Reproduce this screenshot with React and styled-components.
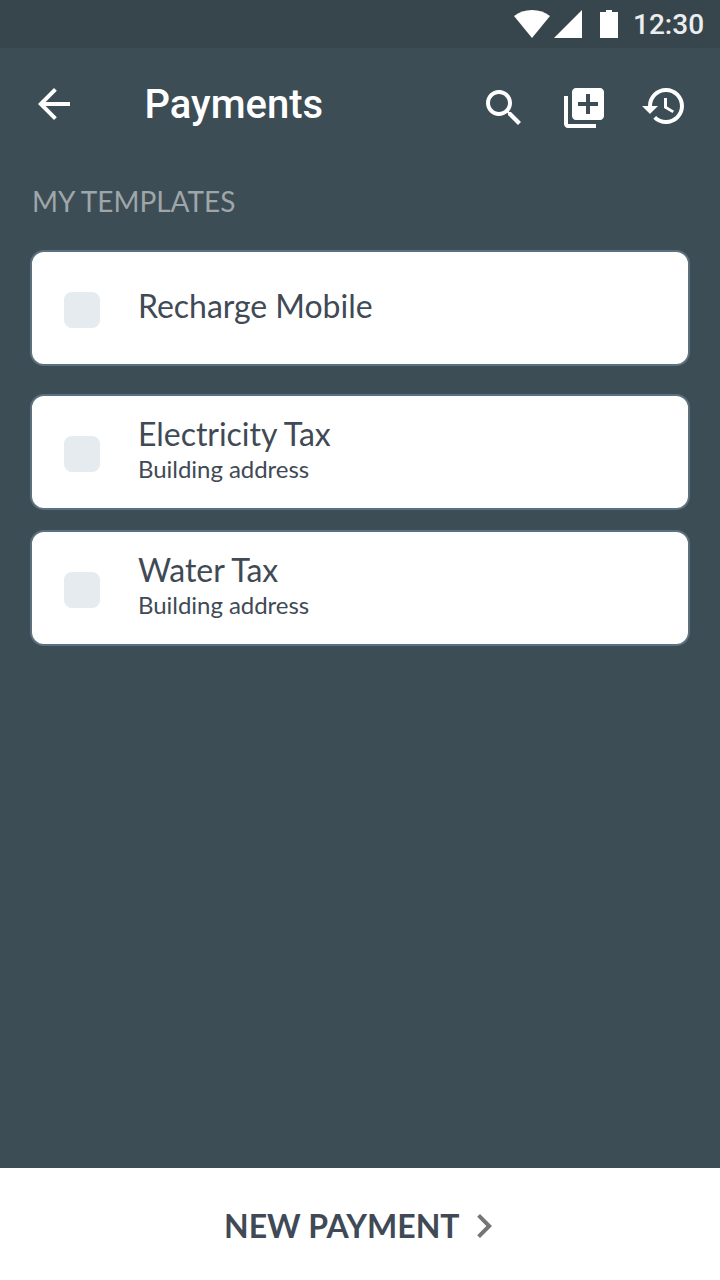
import React from "react";
import styled, { createGlobalStyle } from "styled-components";

const GlobalStyle = createGlobalStyle`
  *, *::before, *::after { box-sizing: border-box; }
  body { margin: 0; background: #3d4d55; }
  button { border: 0; padding: 0; background: none; color: inherit; font: inherit; }
`;

const Screen = styled.div`
  display: flex;
  flex-direction: column;
  width: 720px;
  height: 1280px;
  background: #3d4d55;
  font-family: Lato, sans-serif;
  overflow: hidden;
`;

const StatusBar = styled.div`
  display: flex;
  justify-content: flex-end;
  height: 48px;
  padding: 10px 16px 0 0;
  background: #37464d;
  color: #fff;
`;

const StatusIcon = styled.svg`
  flex: none;
  display: block;
  height: 28px;
  width: ${(p) => p.$width}px;
  margin-right: ${(p) => p.$gap}px;
  fill: #fff;
`;

const Clock = styled.span`
  width: 71px;
  padding-top: 1px;
  color: #ebedee;
  font: 500 28px/28px Roboto, sans-serif;
  white-space: nowrap;
`;

const AppBar = styled.header`
  display: flex;
  height: 112px;
  padding: 32px 32px 0 30px;
  color: #fff;
`;

const Title = styled.h1`
  flex: 1;
  margin: 1px 0 0 66.5px;
  font: 500 40px/48px Roboto, sans-serif;
`;

const IconButton = styled.button`
  flex: none;
  width: 48px;
  height: 48px;
  margin-top: ${(p) => p.$drop || 0}px;
  margin-left: ${(p) => p.$gap || 0}px;
`;

const Glyph = styled.svg`
  display: block;
  flex: none;
  width: 48px;
  height: 48px;
  fill: currentColor;
`;

const Content = styled.main`
  flex: 1;
  padding: 24px 30px 0;
`;

const SectionTitle = styled.h2`
  margin: 0 0 32px 2px;
  color: #9fa6aa;
  font-weight: 400;
  font-size: 28px;
  line-height: 34px;
`;

const Card = styled.article`
  display: flex;
  height: 116px;
  margin-bottom: ${(p) => p.$gap}px;
  border: 2px solid #5b717e;
  border-radius: 14px;
  background: #fff;
  color: #3f4a56;
`;

const CheckBox = styled.span`
  flex: none;
  width: 36px;
  height: 36px;
  margin: 40px 38px 0 32px;
  border-radius: 8px;
  background: #e6ebef;
`;

const CardText = styled.div`
  padding-top: ${(p) => (p.$single ? 34 : 18)}px;
  letter-spacing: -0.04px;
`;

const CardTitle = styled.div`
  font-size: 32px;
  line-height: 40px;
`;

const CardDetail = styled.div`
  font-size: 24px;
  line-height: 30px;
`;

const NewPayment = styled.button`
  display: flex;
  align-items: center;
  height: 112px;
  padding: 4px 0 0 224px;
  background: #fff;
  color: #3f4a56;
`;

const NewPaymentLabel = styled.span`
  font: 700 32px/40px Lato, sans-serif;
`;

const Chevron = styled(Glyph)`
  color: #757575;
`;

const templates = [
  { title: "Recharge Mobile", gap: 28 },
  { title: "Electricity Tax", detail: "Building address", gap: 20 },
  { title: "Water Tax", detail: "Building address", gap: 0 },
];

const icons = {
  back: "M20 11H7.83l5.59-5.59L12 4l-8 8 8 8 1.41-1.41L7.83 13H20v-2z",
  search:
    "M15.5 14h-.79l-.28-.27C15.41 12.59 16 11.11 16 9.5 16 5.91 13.09 3 9.5 3S3 5.91 3 9.5 5.91 16 9.5 16c1.61 0 3.09-.59 4.23-1.57l.27.28v.79l5 4.99L20.49 19l-4.99-5zm-6 0C7.01 14 5 11.99 5 9.5S7.01 5 9.5 5 14 7.01 14 9.5 11.99 14 9.5 14z",
  add: "M4 6H2v14c0 1.1.9 2 2 2h14v-2H4V6zm16-4H8c-1.1 0-2 .9-2 2v12c0 1.1.9 2 2 2h12c1.1 0 2-.9 2-2V4c0-1.1-.9-2-2-2zm-1 9h-4v4h-2v-4H9V9h4V5h2v4h4v2z",
  history:
    "M13 3c-4.97 0-9 4.03-9 9H1l3.89 3.89.07.14L9 12H6c0-3.87 3.13-7 7-7s7 3.13 7 7-3.13 7-7 7c-1.93 0-3.68-.79-4.94-2.06l-1.42 1.42C8.27 19.99 10.51 21 13 21c4.97 0 9-4.03 9-9s-4.03-9-9-9zm-1 5v5l4.28 2.54.72-1.21-3.5-2.08V8H12z",
  chevron: "M10 6L8.59 7.41 13.17 12l-4.58 4.59L10 18l6-6z",
};

const MaterialIcon = ({ name, as: Component = Glyph }) => (
  <Component viewBox="0 0 24 24" aria-hidden="true">
    <path d={icons[name]} />
  </Component>
);

export default function App() {
  return (
    <Screen>
      <GlobalStyle />
      <StatusBar>
        <StatusIcon $width={36} $gap={4} viewBox="0 0 36 28">
          <path d="M0 6C5 2 11 0 18 0s13 2 18 6L18 28z" />
        </StatusIcon>
        <StatusIcon $width={28} $gap={18} viewBox="0 0 28 28">
          <path d="M28 0v28H0z" />
        </StatusIcon>
        <StatusIcon $width={18} $gap={15} viewBox="0 0 18 28">
          <path d="M6 0h6v2h6v26H0V2h6z" />
        </StatusIcon>
        <Clock>12:30</Clock>
      </StatusBar>
      <AppBar>
        <IconButton aria-label="Back">
          <MaterialIcon name="back" />
        </IconButton>
        <Title>Payments</Title>
        <IconButton $drop={4} aria-label="Search">
          <MaterialIcon name="search" />
        </IconButton>
        <IconButton $drop={4} $gap={32} aria-label="Add template">
          <MaterialIcon name="add" />
        </IconButton>
        <IconButton $drop={2} $gap={32} aria-label="History">
          <MaterialIcon name="history" />
        </IconButton>
      </AppBar>
      <Content>
        <SectionTitle>MY TEMPLATES</SectionTitle>
        {templates.map(({ title, detail, gap }) => (
          <Card key={title} $gap={gap}>
            <CheckBox />
            <CardText $single={!detail}>
              <CardTitle>{title}</CardTitle>
              {detail && <CardDetail>{detail}</CardDetail>}
            </CardText>
          </Card>
        ))}
      </Content>
      <NewPayment>
        <NewPaymentLabel>NEW PAYMENT</NewPaymentLabel>
        <MaterialIcon name="chevron" as={Chevron} />
      </NewPayment>
    </Screen>
  );
}
